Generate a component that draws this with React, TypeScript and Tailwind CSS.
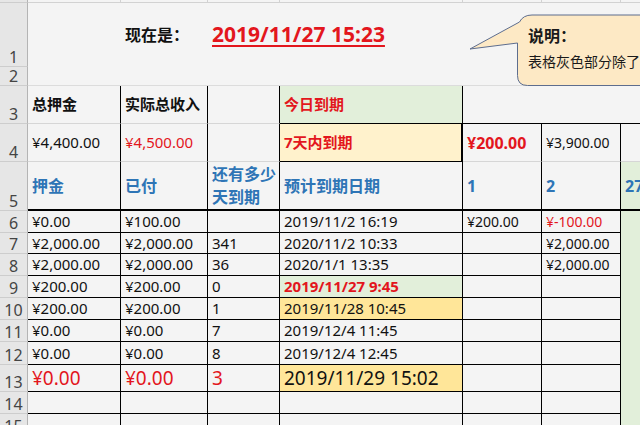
import type { ReactNode } from 'react';

const cell = 'flex items-center pl-[4px] whitespace-nowrap overflow-hidden';
const box = 'border-r border-b border-black';
const hdr =
  'flex items-end justify-center overflow-hidden text-[16px] leading-[18px] text-[#444] bg-[#e6e6e6] border-r border-b border-r-[#b4b4b4] border-b-[#cdcdcd]';

function Hdr({ n }: { n?: string }) {
  return <div className={hdr}>{n}</div>;
}

function C({ className = '', children }: { className?: string; children?: ReactNode }) {
  return <div className={`${cell} ${className}`}>{children}</div>;
}

interface Row {
  n: string;
  a: string;
  b: string;
  c: string;
  d: string;
  e: string;
  f: string;
}

const rows: Row[] = [
  { n: '6', a: '¥0.00', b: '¥100.00', c: '', d: '2019/11/2 16:19', e: '¥200.00', f: '¥-100.00' },
  { n: '7', a: '¥2,000.00', b: '¥2,000.00', c: '341', d: '2020/11/2 10:33', e: '', f: '¥2,000.00' },
  { n: '8', a: '¥2,000.00', b: '¥2,000.00', c: '36', d: '2020/1/1 13:35', e: '', f: '¥2,000.00' },
  { n: '9', a: '¥200.00', b: '¥200.00', c: '0', d: '2019/11/27 9:45', e: '', f: '' },
  { n: '10', a: '¥200.00', b: '¥200.00', c: '1', d: '2019/11/28 10:45', e: '', f: '' },
  { n: '11', a: '¥0.00', b: '¥0.00', c: '7', d: '2019/12/4 11:45', e: '', f: '' },
  { n: '12', a: '¥0.00', b: '¥0.00', c: '8', d: '2019/12/4 12:45', e: '', f: '' },
];

export default function App() {
  return (
    <div className="relative w-[640px] h-[425px] overflow-hidden bg-[#f4f4f4] text-[#111] font-['Noto_Sans','Noto_Sans_CJK_SC',sans-serif]">
      <div className="grid w-[720px] grid-cols-[28px_93px_87px_72px_183px_79px_79px_99px] grid-rows-[3px_64px_19px_38px_38px_49px_22px_21px_22px_22px_22px_22px_23px_27px_22px_22px]">
        {/* row 0 strip */}
        <Hdr />
        <div className="border-r border-b border-[#d2d2d2]" />
        <div className="border-r border-b border-[#d2d2d2]" />
        <div className="border-r border-b border-[#d2d2d2]" />
        <div className="border-r border-b border-[#d2d2d2]" />
        <div className="border-r border-b border-[#d2d2d2]" />
        <div className="border-r border-b border-[#d2d2d2]" />
        <div className="border-b border-[#d2d2d2]" />

        {/* row 1 */}
        <Hdr n="1" />
        <div />
        <C className="text-[16px] font-bold">现在是：</C>
        <C className="col-span-2 text-[21px] font-bold text-[#e3161d] underline underline-offset-[3px]">
          2019/11/27 15:23
        </C>
        <div className="col-span-3" />

        {/* row 2 */}
        <Hdr n="2" />
        <div className="col-span-7 border-b border-[#dcdcdc]" />

        {/* row 3 */}
        <Hdr n="3" />
        <C className="border-r border-b border-r-black border-b-[#d6d6d6] text-[15px] font-bold">总押金</C>
        <C className="border-r border-b border-r-black border-b-[#d6d6d6] text-[15px] font-bold">实际总收入</C>
        <C className="border-r border-b border-r-black border-b-[#d6d6d6]" />
        <C className={`${box} bg-[#e2efda] text-[15px] font-bold text-[#e3161d]`}>今日到期</C>
        <div className="border-b border-black" />
        <div className="border-b border-black" />
        <div className="border-b border-black" />

        {/* row 4 */}
        <Hdr n="4" />
        <C className="border-r border-b border-r-black border-b-[#d6d6d6] text-[15px]">¥4,400.00</C>
        <C className="border-r border-b border-r-black border-b-[#d6d6d6] text-[15px] text-[#e3161d]">¥4,500.00</C>
        <C className="border-r border-b border-r-black border-b-[#d6d6d6]" />
        <C className="border-r-2 border-b border-black bg-[#fff2cc] text-[15px] font-bold text-[#e3161d]">7天内到期</C>
        <C className="border-r border-b border-r-black border-b-[#d6d6d6] text-[16px] font-bold text-[#e3161d]">¥200.00</C>
        <C className="border-r border-b border-r-black border-b-[#d6d6d6] text-[14px]">¥3,900.00</C>
        <div className="border-b border-[#d6d6d6]" />

        {/* row 5 */}
        <Hdr n="5" />
        <C className="border-r border-b-2 border-black text-[16px] font-bold text-[#2e75b6]">押金</C>
        <C className="border-r border-b-2 border-black text-[16px] font-bold text-[#2e75b6]">已付</C>
        <div className="flex flex-col justify-center pl-[4px] border-r border-b-2 border-black text-[16px] leading-[23px] font-bold text-[#2e75b6]">
          <span>还有多少</span>
          <span>天到期</span>
        </div>
        <C className="border-r border-b-2 border-black text-[16px] font-bold text-[#2e75b6]">预计到期日期</C>
        <C className="border-r border-b-2 border-black text-[16px] font-bold text-[#2e75b6]">1</C>
        <C className="border-r border-b-2 border-black text-[16px] font-bold text-[#2e75b6]">2</C>
        <C className="border-b-2 border-black bg-[#e2efda] text-[16px] font-bold text-[#2e75b6]">27</C>

        {/* data rows */}
        {rows.map((r) => (
          <Row key={r.n} r={r} />
        ))}

        {/* row 13 totals */}
        <Hdr n="13" />
        <C className={`${box} text-[19px] text-[#e3161d]`}>¥0.00</C>
        <C className={`${box} text-[19px] text-[#e3161d]`}>¥0.00</C>
        <C className={`${box} text-[19px] text-[#e3161d]`}>3</C>
        <C className={`${box} bg-[#ffe699] text-[19px]`}>2019/11/29 15:02</C>
        <C className={box} />
        <C className={box} />
        <div className="bg-[#e2efda]" />

        {/* rows 14, 15 */}
        <Hdr n="14" />
        <C className={box} />
        <C className={box} />
        <C className={box} />
        <C className={box} />
        <C className={box} />
        <C className={box} />
        <div className="bg-[#e2efda]" />

        <Hdr n="15" />
        <C className={box} />
        <C className={box} />
        <C className={box} />
        <C className={box} />
        <C className={box} />
        <C className={box} />
        <div className="bg-[#e2efda]" />
      </div>

      {/* note callout */}
      <div className="absolute left-[460px] top-[10px] w-[200px] h-[80px]">
        <svg width="200" height="80" className="absolute inset-0">
          <path
            d="M 10 39 L 59.5 12 Q 63 5 72 5 H 199 V 75.5 H 67.5 Q 57.5 75.5 57.5 65.5 V 33 Z"
            fill="#fde9c5"
            stroke="#5d6d8e"
            strokeWidth="1"
          />
        </svg>
        <div className="absolute left-[68px] top-[14px] text-[16px] leading-[24px] font-bold text-[#1a1a1a]">说明：</div>
        <div className="absolute left-[68px] top-[41px] text-[14px] leading-[22px] whitespace-nowrap text-[#1a1a1a]">
          表格灰色部分除了
        </div>
      </div>
    </div>
  );
}

function Row({ r }: { r: Row }) {
  const today = r.n === '9';
  const soon = r.n === '10';
  return (
    <>
      <Hdr n={r.n} />
      <C className={`${box} text-[15px]`}>{r.a}</C>
      <C className={`${box} text-[15px]`}>{r.b}</C>
      <C className={`${box} text-[15px]`}>{r.c}</C>
      {today ? (
        <C className={`${box} bg-[#e2efda] text-[15px] font-bold text-[#e3161d]`}>{r.d}</C>
      ) : soon ? (
        <C className={`${box} bg-[#ffe699] text-[15px]`}>{r.d}</C>
      ) : (
        <C className={`${box} text-[15px]`}>{r.d}</C>
      )}
      <C className={`${box} text-[14px]`}>{r.e}</C>
      {r.f.startsWith('¥-') ? (
        <C className={`${box} text-[14px] text-[#e3161d]`}>{r.f}</C>
      ) : (
        <C className={`${box} text-[14px]`}>{r.f}</C>
      )}
      <div className="bg-[#e2efda]" />
    </>
  );
}
